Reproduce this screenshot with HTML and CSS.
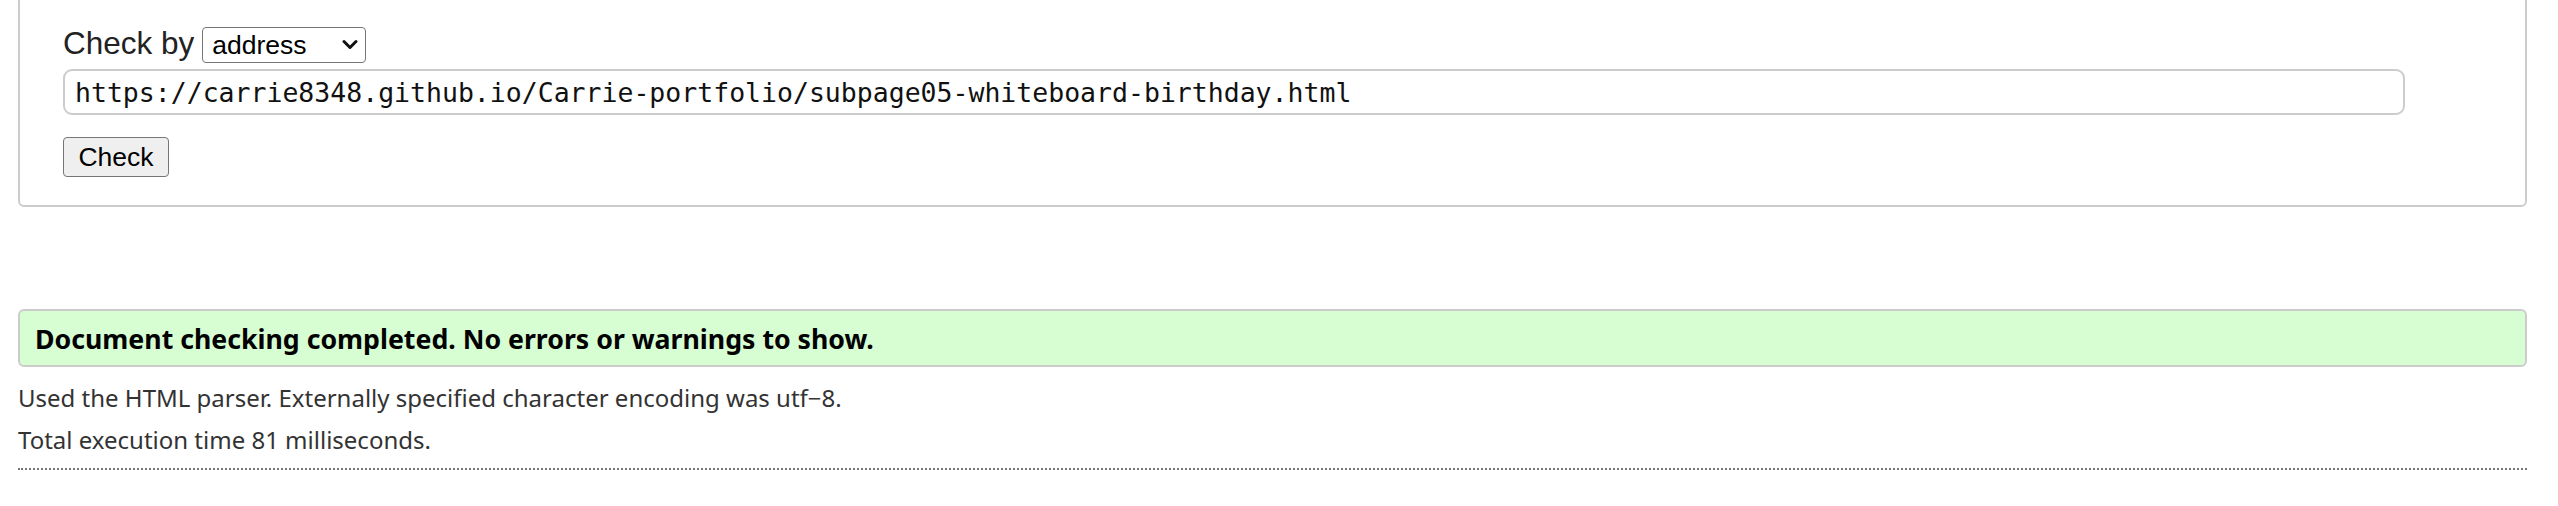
FILE: index.html
```html
<!DOCTYPE html>
<html lang="en">
<head>
<meta charset="utf-8">
<title>Nu Html Checker</title>
<link rel="stylesheet" href="styles.css">
</head>
<body>
<form class="checker">
  <div class="row">
    <label class="by-label" for="docselect">Check by</label>
    <span class="select">address<svg class="chev" viewBox="0 0 16 12" width="16" height="12"><path d="M2 2.5 L8 8.5 L14 2.5" fill="none" stroke="#111" stroke-width="3" stroke-linecap="round" stroke-linejoin="round"/></svg></span>
  </div>
  <div class="url">https://carrie8348.github.io/Carrie-portfolio/subpage05-whiteboard-birthday.html</div>
  <div class="actions"><span class="btn">Check</span></div>
</form>
<p class="success">Document checking completed. No errors or warnings to show.</p>
<p class="info">Used the HTML parser. Externally specified character encoding was utf−8.</p>
<p class="info">Total execution time 81 milliseconds.</p>
<hr class="dots">
</body>
</html>
```
FILE: styles.css
```css
html, body {
  margin: 0;
  background: #fff;
}
body {
  padding: 0 31px 0 18px;
  font-family: "Liberation Sans", Arial, sans-serif;
  color: #222;
}
.checker {
  margin: -20px 0 0 0;
  border: 2px solid #cccccc;
  border-radius: 6px;
  padding: 45px 120px 28px 43px;
  display: flex;
  flex-direction: column;
}
.row {
  display: flex;
  align-items: center;
  height: 36px;
}
.by-label {
  font-size: 31.5px;
  color: #222;
  margin-right: 8px;
  position: relative;
  top: -2px;
}
.select {
  box-sizing: border-box;
  width: 164px;
  height: 36px;
  border: 1px solid #767676;
  border-radius: 4px;
  display: flex;
  align-items: center;
  justify-content: space-between;
  padding: 0 7px 0 9px;
  font-size: 26.5px;
  color: #000;
}
.chev {
  display: block;
}
.url {
  box-sizing: border-box;
  margin-top: 6px;
  height: 46px;
  border: 2px solid #cccccc;
  border-radius: 9px;
  padding: 0 10px;
  display: flex;
  align-items: center;
  font-family: "DejaVu Sans Mono", "Liberation Mono", monospace;
  font-size: 26.5px;
  color: #111;
}
.actions {
  margin-top: 22px;
  display: flex;
}
.btn {
  box-sizing: border-box;
  width: 106px;
  height: 40px;
  border: 1px solid #767676;
  border-radius: 4px;
  background: #efefef;
  display: flex;
  align-items: center;
  justify-content: center;
  font-size: 26.5px;
  color: #000;
}
.success {
  margin: 102px 0 0 0;
  box-sizing: border-box;
  height: 58px;
  border: 2px solid #cccccc;
  border-radius: 6px;
  background: #d7fdd3;
  padding: 0 15px;
  display: flex;
  align-items: center;
  font-family: "Noto Sans", "Liberation Sans", sans-serif;
  font-weight: bold;
  font-size: 26.7px;
  color: #000;
}
.info {
  margin: 0;
  font-family: "Noto Sans", "Liberation Sans", sans-serif;
  font-size: 24px;
  line-height: 42px;
  color: #333;
}
.success + .info {
  margin-top: 10px;
}
.dots {
  margin: 7px 0 0 0;
  border: 0;
  border-top: 2px dotted #777;
  height: 0;
}
```
